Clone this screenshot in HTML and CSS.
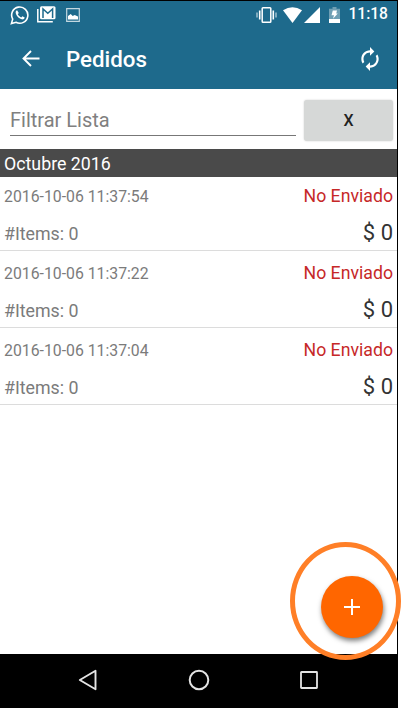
FILE: index.html
```html
<!DOCTYPE html>
<html lang="es">
<head>
    <meta charset="UTF-8">
    <meta name="viewport" content="width=device-width, initial-scale=1.0">
    <title>Pedidos</title>
    <link rel="stylesheet" href="styles.css">
</head>
<body>
    <div class="phone">
        <!-- Status bar -->
        <div class="status-bar">
            <div class="status-left">
                <svg width="20" height="20" viewBox="0 0 20 20">
                    <path d="M1.4 18.6l1.3-4.5A8.1 8.1 0 1 1 6 17.3z" fill="none" stroke="#fff" stroke-width="1.6"/>
                    <path d="M7.1 5.2c-1.5.6-1.8 2.2-1 4 1 2.4 3.2 4.4 5.6 5.1 1.5.4 2.8-.4 3-1.8l-2.3-1.3-1.2 1.2c-1.6-.6-2.7-1.7-3.4-3.1l1-1.3z" fill="#fff"/>
                </svg>
                <svg width="19" height="17" viewBox="0 0 19 17">
                    <path d="M.8 3v12.700h15" fill="none" stroke="#fff" stroke-width="1.5"/>
                    <path d="M4.500.3h12.500q1.500 0 1.500 1.500v10q0 1.500-1.500 1.500H4.500q-1.500 0-1.500-1.500v-10Q3 .3 4.500.3z" fill="#fff"/>
                    <path d="M6 12V3l4.800 4.300L15.600 3v9" fill="none" stroke="#1e6a8c" stroke-width="1.5"/>
                </svg>
                <svg width="14" height="14" viewBox="0 0 14 14">
                    <path d="M.7.7h12.600v12.600H.7z" fill="none" stroke="#c3d8e1" stroke-width="1.2"/>
                    <path d="M2 11.500V8l2.700-2 2 2 2-1 3.300 1.500v3z" fill="#fff"/>
                </svg>
            </div>
            <div class="status-right">
                <svg class="vibrate" width="21" height="16" viewBox="0 0 21 16">
                    <rect x="6.2" y=".8" width="8.6" height="14.4" rx=".8" fill="none" stroke="#fff" stroke-width="1.5"/>
                    <path d="M3.700 3.500v9M17.300 3.500v9" stroke="#fff" stroke-width="1.6"/>
                    <path d="M1 5.500v5M20 5.500v5" stroke="#b4ced9" stroke-width="1.3"/>
                </svg>
                <svg class="wifi" width="19" height="16" viewBox="0 0 20 16" preserveAspectRatio="none">
                    <path d="M0 3.300Q10-3 20 3.300L10 16z" fill="#fff"/>
                </svg>
                <svg class="signal" width="16" height="16" viewBox="0 0 16 16">
                    <path d="M16 0v16H0z" fill="#fff"/>
                </svg>
                <svg class="battery" width="11" height="16" viewBox="0 0 11 16">
                    <path d="M3.500 0h4v1.800H11V12H0V1.800h3.500z" fill="#6f9fb4"/>
                    <path d="M0 12h11v4H0z" fill="#fff"/>
                    <path d="M3.800 3.500H8L7.200 6.500h1.600L4 11.700l1-3.400H2.500z" fill="#fff"/>
                </svg>
                <span class="clock">11:18</span>
            </div>
        </div>

        <!-- Toolbar -->
        <div class="toolbar">
            <svg class="back" width="18" height="17" viewBox="0 0 18 17">
                <path d="M17.500 8.500H1.500M9 1L1.500 8.500 9 16" fill="none" stroke="#fff" stroke-width="1.9"/>
            </svg>
            <h1 class="title">Pedidos</h1>
            <svg class="refresh" width="26" height="26" viewBox="0 0 24 24">
                <path d="M12 6v3l4-4-4-4v3c-4.420 0-8 3.580-8 8 0 1.570.46 3.030 1.240 4.260L6.700 14.800c-.45-.83-.7-1.790-.7-2.800 0-3.310 2.690-6 6-6zm6.760 1.740L17.300 9.200c.44.84.7 1.790.7 2.800 0 3.310-2.690 6-6 6v-3l-4 4 4 4v-3c4.420 0 8-3.580 8-8 0-1.570-.46-3.030-1.240-4.260z" fill="#fff"/>
            </svg>
        </div>

        <!-- Filter -->
        <div class="filter">
            <input class="filter-input" type="text" placeholder="Filtrar Lista">
            <button class="clear-btn">X</button>
        </div>

        <!-- Orders -->
        <div class="month">Octubre 2016</div>
        <div class="orders">
            <div class="order">
                <div class="line">
                    <span class="date">2016-10-06 11:37:54</span>
                    <span class="state">No Enviado</span>
                </div>
                <div class="line">
                    <span class="items">#Items: 0</span>
                    <span class="total">$ 0</span>
                </div>
            </div>
            <div class="order">
                <div class="line">
                    <span class="date">2016-10-06 11:37:22</span>
                    <span class="state">No Enviado</span>
                </div>
                <div class="line">
                    <span class="items">#Items: 0</span>
                    <span class="total">$ 0</span>
                </div>
            </div>
            <div class="order">
                <div class="line">
                    <span class="date">2016-10-06 11:37:04</span>
                    <span class="state">No Enviado</span>
                </div>
                <div class="line">
                    <span class="items">#Items: 0</span>
                    <span class="total">$ 0</span>
                </div>
            </div>
        </div>

        <!-- Navigation bar -->
        <div class="nav-bar">
            <svg width="20" height="22" viewBox="0 0 20 22">
                <path d="M17.500 1.800v18.400L1.800 11z" fill="none" stroke="#e4e4e4" stroke-width="1.9" stroke-linejoin="round"/>
            </svg>
            <svg width="22" height="22" viewBox="0 0 22 22">
                <circle cx="11" cy="11" r="9.3" fill="none" stroke="#e4e4e4" stroke-width="2"/>
            </svg>
            <svg width="20" height="20" viewBox="0 0 20 20">
                <rect x="2" y="2" width="16" height="16" rx=".5" fill="none" stroke="#e4e4e4" stroke-width="1.8"/>
            </svg>
        </div>

        <button class="fab">
            <svg width="16" height="16" viewBox="0 0 16 16">
                <path d="M8 0v16M0 8h16" stroke="#fff" stroke-width="2"/>
            </svg>
        </button>
        <div class="ring"></div>
    </div>
</body>
</html>
```
FILE: styles.css
```css
* {
    margin: 0;
    padding: 0;
    box-sizing: border-box;
}

body {
    font-family: Roboto, 'Liberation Sans', sans-serif;
    background: #fff;
    overflow: hidden;
}

svg {
    display: block;
    flex-shrink: 0;
}

.phone {
    position: relative;
    display: flex;
    flex-direction: column;
    width: 398px;
    height: 708px;
    border-top: 1px solid #000;
    border-right: 1px solid #000;
    background: #fff;
}

.status-bar {
    display: flex;
    justify-content: space-between;
    align-items: center;
    height: 27px;
    padding: 0 9px 0 10px;
    background: #1e6a8c;
}

.status-left {
    display: flex;
    align-items: center;
    gap: 7px;
}

.status-left svg:last-child {
    margin-left: 3px;
}

.status-right {
    display: flex;
    align-items: center;
}

.wifi {
    margin-left: 6px;
}

.signal {
    margin-left: 2px;
}

.battery {
    margin: 0 8px 0 9px;
}

.clock {
    color: #fff;
    font-size: 15.6px;
    font-weight: 500;
    line-height: 29px;
}

.toolbar {
    display: flex;
    align-items: center;
    height: 61px;
    padding: 0 14px 0 22px;
    background: #1e6a8c;
}

.title {
    flex: 1;
    margin-left: 26px;
    color: #fff;
    font-size: 22.3px;
    font-weight: 500;
}

.filter {
    display: flex;
    align-items: center;
    height: 60px;
    padding: 2px 4px 0 10px;
    gap: 8px;
}

.filter-input {
    flex: 1;
    min-width: 0;
    height: 32px;
    padding-top: 1px;
    border: none;
    border-bottom: 1px solid #777;
    background: none;
    font-family: inherit;
    font-size: 20px;
    color: #222;
}

.filter-input::placeholder {
    color: #808080;
}

.clear-btn {
    width: 89px;
    height: 41px;
    border: none;
    border-radius: 3px;
    background: #d6d8d7;
    box-shadow: 0 0 2px rgba(0, 0, 0, 0.2);
    font-family: inherit;
    font-size: 16px;
    font-weight: 500;
    color: #222;
}

.month {
    height: 28px;
    padding-left: 4px;
    background: #4a4a4a;
    color: #fff;
    font-size: 17.8px;
    line-height: 29px;
}

.orders {
    flex: 1;
}

.order {
    height: 77px;
    padding: 3px 4px 0 4px;
    border-bottom: 1px solid #dcdcdc;
}

.order:first-child {
    height: 74px;
    padding-top: 0;
}

.line {
    display: flex;
    justify-content: space-between;
    height: 37px;
    line-height: 39px;
}

.date {
    color: #7b7b7b;
    font-size: 15.8px;
    line-height: 40px;
}

.state {
    color: #c62828;
    font-size: 17.7px;
}

.items {
    color: #7b7b7b;
    font-size: 17.8px;
}

.total {
    color: #333;
    font-size: 22px;
    line-height: 37px;
}

.nav-bar {
    display: flex;
    justify-content: space-between;
    align-items: center;
    height: 54px;
    padding: 0 78px 2px;
    background: #000;
}

/* floats over the list */
.fab {
    position: absolute;
    right: 14px;
    bottom: 70px;
    display: flex;
    justify-content: center;
    align-items: center;
    width: 62px;
    height: 62px;
    border: none;
    border-radius: 50%;
    background: #ff6600;
    box-shadow: 1px 3px 5px rgba(0, 0, 0, 0.5);
}

.ring {
    position: absolute;
    left: 290px;
    top: 541px;
    width: 111px;
    height: 118px;
    border: 5px solid #ff7f27;
    border-radius: 50%;
    pointer-events: none;
}
```
